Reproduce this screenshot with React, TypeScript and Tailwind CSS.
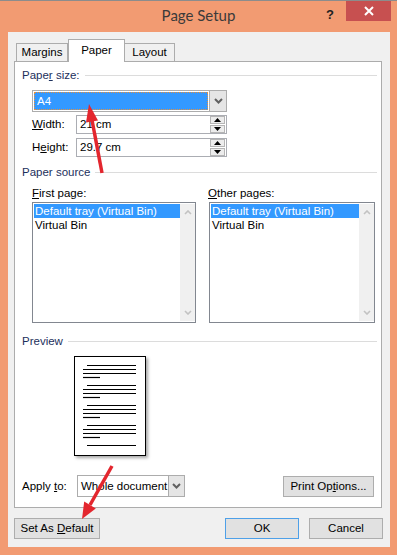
import React from "react";

const Chev = () => (
  <svg width="9" height="6" viewBox="0 0 9 6">
    <path d="M1 1 L4.5 4.5 L8 1" stroke="#606060" strokeWidth="2" fill="none" />
  </svg>
);

const ScrollChev = ({ up }: { up?: boolean }) => (
  <svg width="8" height="5" viewBox="0 0 8 5">
    <path d={up ? "M1 4 L4 1 L7 4" : "M1 1 L4 4 L7 1"} stroke="#c2c2c2" strokeWidth="1.6" fill="none" />
  </svg>
);

const Tri = ({ up }: { up?: boolean }) => (
  <svg width="7" height="4" viewBox="0 0 7 4">
    <path d={up ? "M0 4 L3.5 0 L7 4Z" : "M0 0 L3.5 4 L7 0Z"} fill="#000" />
  </svg>
);

const Header = ({ children }: { children: React.ReactNode }) => (
  <div className="flex items-center h-[15px] mr-[4px]">
    <span className="text-[#1c2f5c] leading-[15px] whitespace-nowrap">{children}</span>
    <div className="flex-1 h-px bg-[#dcdcdc] ml-[5px]" />
  </div>
);

const Spin = ({ value }: { value: string }) => (
  <div className="flex w-[151px] h-[19px] border border-[#abadb3] bg-white">
    <div className="flex-1 pl-[3px] flex items-center leading-[15px] whitespace-nowrap">{value}</div>
    <div className="flex flex-col justify-center gap-[1px] pr-[1px] w-[16px]">
      <div className="h-[8px] border border-[#b5b5b5] bg-[#ececec] flex items-center justify-center">
        <Tri up />
      </div>
      <div className="h-[8px] border border-[#b5b5b5] bg-[#ececec] flex items-center justify-center">
        <Tri />
      </div>
    </div>
  </div>
);

const List = ({ w }: { w: string }) => (
  <div className={"flex h-[121px] border border-[#828790] bg-white p-[1px] pr-0 " + w}>
    <div className="flex-1 flex flex-col leading-[14px] whitespace-nowrap">
      <div className="h-[14px] bg-[#3399ff] text-white pl-[1px]">Default tray (Virtual Bin)</div>
      <div className="h-[14px] pl-[1px]">Virtual Bin</div>
    </div>
    <div className="w-[15px] bg-[#f0f0f0] flex flex-col justify-between items-center py-[6px]">
      <ScrollChev up />
      <ScrollChev />
    </div>
  </div>
);

const PagePreview = () => {
  const lines: { x1: number; x2: number; y: number }[] = [];
  for (let g = 0; g < 4; g++) {
    const b = 8 + g * 20;
    lines.push({ x1: 12, x2: 61, y: b });
    lines.push({ x1: 8, x2: 61, y: b + 4 });
    lines.push({ x1: 8, x2: 61, y: b + 8 });
    lines.push({ x1: 8, x2: 25, y: b + 12 });
  }
  lines.push({ x1: 12, x2: 61, y: 88 });
  return (
    <div className="ml-[52px] mt-[7px] w-[72px] h-[100px] border border-black bg-white shadow-[2px_2px_3px_rgba(0,0,0,0.35)]">
      <svg width="70" height="98" viewBox="0 0 70 98">
        {lines.map((l, i) => (
          <line key={i} x1={l.x1} x2={l.x2} y1={l.y + 0.5} y2={l.y + 0.5} stroke="#000" strokeWidth="1.2" />
        ))}
      </svg>
    </div>
  );
};

export default function App() {
  return (
    <div className="relative w-[397px] h-[555px] bg-[#f29b72] border-t border-[#8c8c8c] flex flex-col font-['Liberation_Sans',Arial,sans-serif] text-[11.5px] text-black">
      {/* Title bar */}
      <div className="grid grid-cols-[1fr_auto_1fr] h-[31px]">
        <div />
        <div className="font-[Lato] text-[15px] text-[#3a3a3a] leading-[31px] -mt-[1px]">Page Setup</div>
        <div className="flex justify-end items-start">
          <span className="font-bold text-[13px] text-[#222] mt-[4px] mr-[12px]">?</span>
          <div className="w-[45px] h-[20px] bg-[#c75050] flex items-center justify-center mr-[6px]">
            <svg width="10" height="10" viewBox="0 0 10 10">
              <path d="M1 1 L9 9 M9 1 L1 9" stroke="#fff" strokeWidth="2" />
            </svg>
          </div>
        </div>
      </div>

      {/* Client */}
      <div className="ml-[8px] w-[382px] h-[515px] bg-[#f0f0f0] pl-[6px] pt-[7px] flex flex-col">
        {/* Tabs */}
        <div className="flex items-end h-[23px] pl-[2px] relative z-10">
          <div className="w-[52px] h-[18px] mb-[1px] border border-b-0 border-[#acacac] bg-[#f0f0f0] flex items-center justify-center leading-[15px]">
            Margins
          </div>
          <div className="w-[57px] h-[23px] border border-b-0 border-[#acacac] bg-white flex items-center justify-center pb-[1px] leading-[15px]">
            Paper
          </div>
          <div className="w-[50px] h-[18px] mb-[1px] border border-b-0 border-l-0 border-[#acacac] bg-[#f0f0f0] flex items-center justify-center leading-[15px]">
            Layout
          </div>
        </div>

        {/* Panel */}
        <div className="-mt-[1px] w-[368px] h-[447px] border border-[#acacac] bg-white pl-[7px] pt-[6px] flex flex-col">
          <Header>
            Pape<u>r</u> size:
          </Header>
          <div className="ml-[10px] mt-[7px] flex w-[195px] h-[22px] border border-[#acacac] bg-white">
            <div className="flex-1 p-[1px]">
              <div className="h-full bg-[#3399ff] border border-dotted border-[#e8903a] text-white pl-[2px] flex items-center leading-[15px]">
                A4
              </div>
            </div>
            <div className="w-[17px] bg-[#e5e5e5] border-l border-[#acacac] flex items-center justify-center">
              <Chev />
            </div>
          </div>
          <div className="ml-[10px] mt-[3px] flex items-center">
            <div className="w-[44px] leading-[15px]">
              <u>W</u>idth:
            </div>
            <Spin value="21 cm" />
          </div>
          <div className="ml-[10px] mt-[4px] flex items-center">
            <div className="w-[44px] leading-[15px]">
              H<u>e</u>ight:
            </div>
            <Spin value="29.7 cm" />
          </div>

          <div className="mt-[8px]">
            <Header>Paper source</Header>
          </div>
          <div className="flex ml-[10px] mt-[6px] gap-[12px]">
            <div className="flex flex-col">
              <div className="h-[15px] leading-[15px] mb-[1px]">
                <u>F</u>irst page:
              </div>
              <List w="w-[164px]" />
            </div>
            <div className="flex flex-col">
              <div className="h-[15px] leading-[15px] mb-[1px]">
                <u>O</u>ther pages:
              </div>
              <div className="ml-[1px]">
                <List w="w-[166px]" />
              </div>
            </div>
          </div>

          <div className="mt-[11px]">
            <Header>Preview</Header>
          </div>
          <PagePreview />

          <div className="mt-[19px] flex items-center mr-[7px]">
            <div className="w-[55px] leading-[15px] whitespace-nowrap">
              <span>
                Apply <u>t</u>o:
              </span>
            </div>
            <div className="flex w-[108px] h-[22px] border border-[#acacac] bg-white">
              <div className="flex-1 pl-[3px] flex items-center leading-[15px] whitespace-nowrap">Whole document</div>
              <div className="w-[16px] bg-[#e5e5e5] border-l border-[#acacac] flex items-center justify-center">
                <Chev />
              </div>
            </div>
            <div className="flex-1" />
            <div className="w-[91px] h-[21px] mt-[1px] bg-[#e1e1e1] border border-[#adadad] flex items-center justify-center leading-[15px] whitespace-nowrap">
              <span>
                Print Op<u>t</u>ions...
              </span>
            </div>
          </div>
        </div>

        {/* Bottom buttons */}
        <div className="flex mt-[10px] mr-[7px]">
          <div className="w-[86px] h-[21px] bg-[#e1e1e1] border border-[#adadad] flex items-center justify-center leading-[15px] whitespace-nowrap">
            <span>
              Set As <u>D</u>efault
            </span>
          </div>
          <div className="flex-1" />
          <div className="w-[74px] h-[21px] bg-[#e1e1e1] border border-[#4ea0e8] flex items-center justify-center leading-[15px]">
            OK
          </div>
          <div className="w-[74px] h-[21px] ml-[10px] bg-[#e1e1e1] border border-[#adadad] flex items-center justify-center leading-[15px]">
            Cancel
          </div>
        </div>
      </div>

      {/* Annotation arrows */}
      <svg className="absolute left-0 top-0 pointer-events-none" width="397" height="555" viewBox="0 0 397 555">
        <line x1="102" y1="172" x2="92" y2="119" stroke="#e3262e" strokeWidth="3.5" />
        <polygon points="89,103 98,119.5 86,121.5" fill="#e3262e" />
        <line x1="112" y1="465" x2="90" y2="504" stroke="#e3262e" strokeWidth="3.5" />
        <polygon points="82,518 95.8,507.4 84.2,500.6" fill="#e3262e" />
      </svg>
    </div>
  );
}
